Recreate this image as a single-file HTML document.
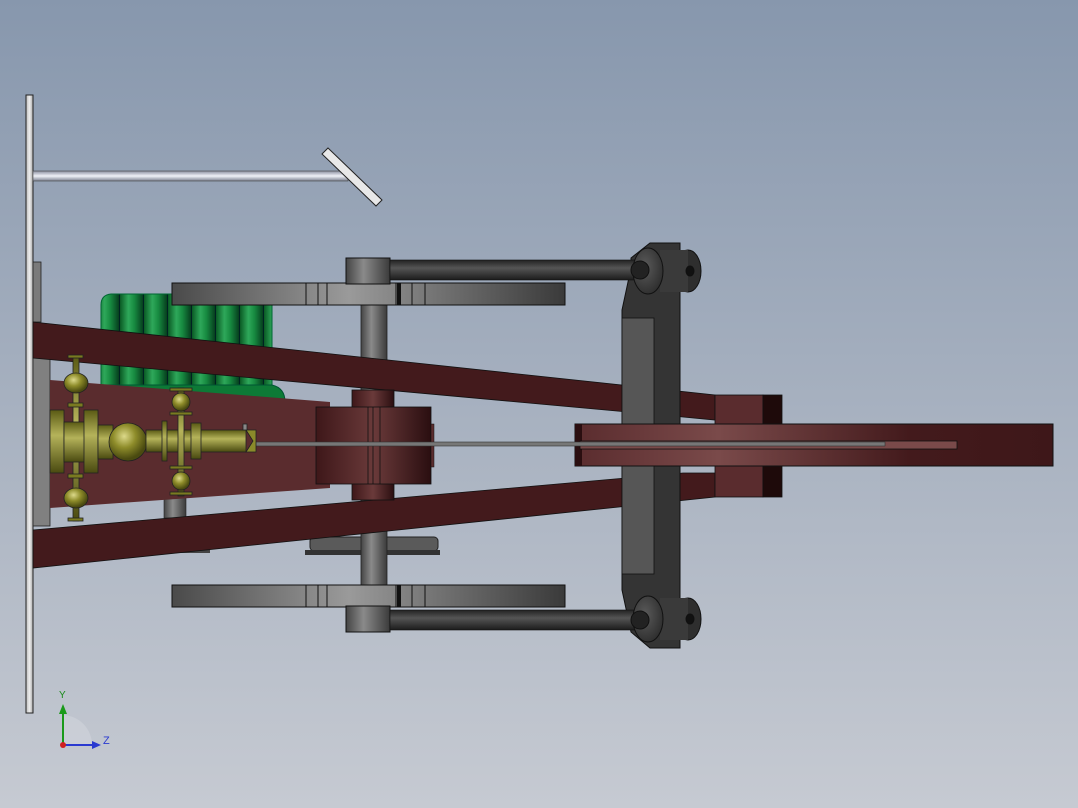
<!DOCTYPE html>
<html><head><meta charset="utf-8"><style>
html,body{margin:0;padding:0;width:1078px;height:808px;overflow:hidden}
body{background:linear-gradient(#8797ad,#c6cad2)}
svg{position:absolute;left:0;top:0}
</style></head><body>
<svg width="1078" height="808" viewBox="0 0 1078 808" xmlns="http://www.w3.org/2000/svg">
<defs>
<linearGradient id="gH" x1="0" x2="1"><stop offset="0" stop-color="#4a4a4a"/><stop offset=".45" stop-color="#9a9a9a"/><stop offset="1" stop-color="#3a3a3a"/></linearGradient>
<linearGradient id="gV" x1="0" x2="0" y1="0" y2="1"><stop offset="0" stop-color="#8a8fa0"/><stop offset=".5" stop-color="#f0f2f8"/><stop offset="1" stop-color="#7a7f90"/></linearGradient>
<linearGradient id="gShaft" x1="0" x2="1"><stop offset="0" stop-color="#444"/><stop offset=".4" stop-color="#8a8a8a"/><stop offset="1" stop-color="#3a3a3a"/></linearGradient>
<linearGradient id="gRod" x1="0" x2="0" y1="0" y2="1"><stop offset="0" stop-color="#222"/><stop offset=".4" stop-color="#555"/><stop offset="1" stop-color="#1c1c1c"/></linearGradient>
<linearGradient id="gBar" x1="0" x2="1"><stop offset="0" stop-color="#5a2c2e"/><stop offset=".3" stop-color="#7a4a4a"/><stop offset=".7" stop-color="#431a1c"/><stop offset="1" stop-color="#3e1719"/></linearGradient>
<linearGradient id="gCross" x1="0" x2="1"><stop offset="0" stop-color="#3e1719"/><stop offset=".5" stop-color="#6a3a3a"/><stop offset="1" stop-color="#2a0e10"/></linearGradient>
<linearGradient id="gOl" x1="0" x2="0" y1="0" y2="1"><stop offset="0" stop-color="#5a5a14"/><stop offset=".4" stop-color="#b5b35a"/><stop offset="1" stop-color="#4a4a10"/></linearGradient>
<radialGradient id="gBall" cx=".4" cy=".35" r=".6"><stop offset="0" stop-color="#dcd98a"/><stop offset=".5" stop-color="#8e8c2a"/><stop offset="1" stop-color="#4a4a10"/></radialGradient>
<linearGradient id="gStripe" x1="0" x2="1"><stop offset="0" stop-color="#0a5a24"/><stop offset=".35" stop-color="#2ea85a"/><stop offset=".6" stop-color="#178a40"/><stop offset="1" stop-color="#04361a"/></linearGradient>
<pattern id="gGreen" width="24" height="10" patternUnits="userSpaceOnUse"><rect width="24" height="10" fill="url(#gStripe)"/><rect x="23" width="1" height="10" fill="#022"/></pattern>
<linearGradient id="gPlate" x1="0" x2="1"><stop offset="0" stop-color="#bbb"/><stop offset=".5" stop-color="#eee"/><stop offset="1" stop-color="#aaa"/></linearGradient>
<radialGradient id="gHub" cx=".4" cy=".4" r=".7"><stop offset="0" stop-color="#5a5a5a"/><stop offset="1" stop-color="#2a2a2a"/></radialGradient>
</defs>

<rect x="26" y="95" width="7" height="618" fill="url(#gPlate)" stroke="#222" stroke-width="1"/>
<rect x="33" y="262" width="8" height="60" fill="#7a7a7a" stroke="#222" stroke-width=".8"/>
<rect x="33" y="356" width="17" height="170" fill="#808080" stroke="#222" stroke-width=".8"/>
<rect x="33" y="171" width="315" height="10" fill="url(#gV)" stroke="#444" stroke-width=".6"/>
<polygon points="328,148 382,200 376,206 322,154" fill="#e8e8e8" stroke="#222" stroke-width="1"/>

<path d="M101,305 q0,-10 10,-11 L272,294 L272,400 L101,400 Z" fill="url(#gGreen)" stroke="#063" stroke-width="1"/>
<path d="M96,385 L272,385 Q285,388 285,402 L96,402 Z" fill="#0d7a36" stroke="#053" stroke-width="1"/>

<rect x="310" y="537" width="128" height="14" rx="4" fill="#5a5a5a" stroke="#222"/>
<rect x="305" y="550" width="135" height="5" fill="#333"/>
<rect x="150" y="548" width="60" height="5" fill="#444"/>

<rect x="361" y="285" width="26" height="330" fill="url(#gShaft)" stroke="#222" stroke-width=".8"/>
<rect x="164" y="493" width="22" height="25" fill="url(#gShaft)" stroke="#222" stroke-width=".6"/>

<polygon points="50,380 330,402 330,488 50,508" fill="#5a2c2e"/>
<polygon points="33,322 715,395 715,420 683,417 33,358" fill="#431a1c" stroke="#111" stroke-width=".8"/>
<polygon points="33,530 683,473 715,473 715,497 33,568" fill="#431a1c" stroke="#111" stroke-width=".8"/>

<path d="M631,258 L650,243 L680,243 L680,648 L650,648 L631,632 L622,590 L622,310 L631,268 Z" fill="#343434" stroke="#111"/>
<rect x="622" y="318" width="32" height="256" fill="#565656" stroke="#111" stroke-width=".8"/>

<rect x="352" y="390" width="42" height="110" fill="url(#gCross)" stroke="#111" stroke-width=".8"/>
<rect x="316" y="407" width="115" height="77" fill="url(#gCross)" stroke="#111" stroke-width=".8"/>
<line x1="368" y1="407" x2="368" y2="484" stroke="#111" stroke-width=".8"/>
<line x1="373" y1="407" x2="373" y2="484" stroke="#111" stroke-width=".8"/>
<line x1="380" y1="407" x2="380" y2="484" stroke="#111" stroke-width=".8"/>
<rect x="431" y="424" width="3" height="43" fill="#5a2c2e" stroke="#111" stroke-width=".5"/>

<rect x="715" y="395" width="48" height="102" fill="#5a2c2e" stroke="#111" stroke-width=".8"/>
<rect x="763" y="395" width="19" height="102" fill="#1e0a0a" stroke="#111" stroke-width=".8"/>

<rect x="575" y="424" width="478" height="42" fill="url(#gBar)" stroke="#111" stroke-width="1"/>
<rect x="575" y="424" width="7" height="42" fill="#2a0e10"/>
<rect x="580" y="441" width="377" height="8" fill="#7a4a4a" stroke="#111" stroke-width=".8"/>
<rect x="255" y="442" width="630" height="4" fill="#777" stroke="#333" stroke-width=".6"/>

<rect x="172" y="283" width="393" height="22" fill="url(#gH)" stroke="#111"/>
<rect x="172" y="585" width="393" height="22" fill="url(#gH)" stroke="#111"/>
<g stroke="#111" stroke-width="1"><line x1="306" y1="283" x2="306" y2="305"/><line x1="318" y1="283" x2="318" y2="305"/><line x1="327" y1="283" x2="327" y2="305"/><line x1="396" y1="283" x2="396" y2="305"/><line x1="412" y1="283" x2="412" y2="305"/><line x1="425" y1="283" x2="425" y2="305"/>
<line x1="306" y1="585" x2="306" y2="607"/><line x1="318" y1="585" x2="318" y2="607"/><line x1="327" y1="585" x2="327" y2="607"/><line x1="396" y1="585" x2="396" y2="607"/><line x1="412" y1="585" x2="412" y2="607"/><line x1="425" y1="585" x2="425" y2="607"/></g>
<rect x="397" y="283" width="4" height="22" fill="#111"/><rect x="397" y="585" width="4" height="22" fill="#111"/>

<rect x="346" y="258" width="44" height="26" fill="url(#gShaft)" stroke="#111"/>
<rect x="346" y="606" width="44" height="26" fill="url(#gShaft)" stroke="#111"/>
<rect x="390" y="260" width="250" height="20" fill="url(#gRod)" stroke="#111" stroke-width=".6"/>
<rect x="390" y="610" width="250" height="20" fill="url(#gRod)" stroke="#111" stroke-width=".6"/>
<g stroke="#111" stroke-width="1">
<ellipse cx="688" cy="271" rx="13" ry="21" fill="#2e2e2e"/><rect x="660" y="250" width="28" height="42" fill="#3a3a3a" stroke="none"/>
<ellipse cx="648" cy="271" rx="15" ry="23" fill="url(#gHub)"/><circle cx="640" cy="270" r="9" fill="#222"/>
<ellipse cx="690" cy="271" rx="4" ry="5" fill="#111"/>
<ellipse cx="688" cy="619" rx="13" ry="21" fill="#2e2e2e"/><rect x="660" y="598" width="28" height="42" fill="#3a3a3a" stroke="none"/>
<ellipse cx="648" cy="619" rx="15" ry="23" fill="url(#gHub)"/><circle cx="640" cy="620" r="9" fill="#222"/>
<ellipse cx="690" cy="619" rx="4" ry="5" fill="#111"/>
</g>

<g stroke="#222" stroke-width=".8">
<rect x="73" y="356" width="6" height="165" fill="url(#gOl)"/>
<rect x="68" y="355" width="15" height="3" fill="#7a7a20"/><rect x="68" y="518" width="15" height="3" fill="#7a7a20"/>
<rect x="68" y="403" width="15" height="4" fill="#7a7a20"/><rect x="68" y="474" width="15" height="4" fill="#7a7a20"/>
<ellipse cx="76" cy="383" rx="12" ry="10" fill="url(#gBall)"/>
<ellipse cx="76" cy="498" rx="12" ry="10" fill="url(#gBall)"/>
<rect x="50" y="410" width="14" height="63" fill="url(#gOl)"/>
<rect x="64" y="422" width="22" height="40" fill="url(#gOl)"/>
<rect x="84" y="410" width="14" height="63" fill="url(#gOl)"/>
<rect x="98" y="425" width="15" height="34" fill="url(#gOl)"/>
<circle cx="128" cy="442" r="19" fill="url(#gBall)"/>
<rect x="146" y="430" width="100" height="22" fill="url(#gOl)"/>
<polygon points="246,430 256,430 256,452 246,452 253,441" fill="#8a8a2a"/>
<rect x="162" y="421" width="5" height="40" fill="url(#gOl)"/>
<rect x="191" y="423" width="10" height="36" fill="url(#gOl)"/>
<rect x="178" y="388" width="6" height="108" fill="url(#gOl)"/>
<rect x="170" y="388" width="22" height="3" fill="#7a7a20"/><rect x="170" y="492" width="22" height="3" fill="#7a7a20"/>
<rect x="170" y="412" width="22" height="3" fill="#7a7a20"/><rect x="170" y="466" width="22" height="3" fill="#7a7a20"/>
<ellipse cx="181" cy="402" rx="9" ry="9" fill="url(#gBall)"/>
<ellipse cx="181" cy="481" rx="9" ry="9" fill="url(#gBall)"/>
<rect x="243" y="424" width="4" height="6" fill="#888"/>
</g>

<path d="M62,746 L62,715 A30,30 0 0 1 92,746 Z" fill="#d0d4dc" opacity=".6"/>
<line x1="63" y1="745" x2="63" y2="712" stroke="#1a9a1a" stroke-width="2"/>
<polygon points="59,714 63,704 67,714" fill="#1a9a1a"/>
<line x1="63" y1="745" x2="94" y2="745" stroke="#2a3ad0" stroke-width="2"/>
<polygon points="92,741 101,745 92,749" fill="#2a3ad0"/>
<circle cx="63" cy="745" r="3" fill="#d02020"/>
<text x="59" y="698" font-family="Liberation Sans, sans-serif" font-size="10" fill="#1a8a1a">Y</text>
<text x="103" y="744" font-family="Liberation Sans, sans-serif" font-size="11" fill="#2a3ad0">Z</text>
</svg>
</body></html>
